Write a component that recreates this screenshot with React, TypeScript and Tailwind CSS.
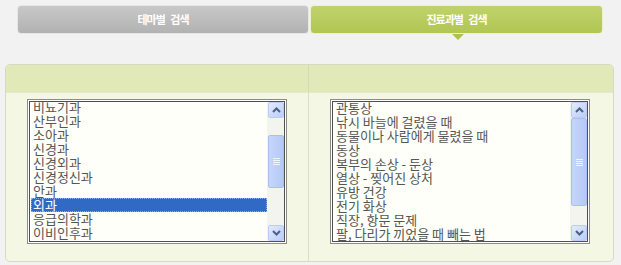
const leftItems = [
  "비뇨기과",
  "산부인과",
  "소아과",
  "신경과",
  "신경외과",
  "신경정신과",
  "안과",
  "외과",
  "응급의학과",
  "이비인후과",
];

const rightItems = [
  "관통상",
  "낚시 바늘에 걸렸을 때",
  "동물이나 사람에게 물렸을 때",
  "동상",
  "복부의 손상 - 둔상",
  "열상 - 찢어진 상처",
  "유방 건강",
  "전기 화상",
  "직장, 항문 문제",
  "팔, 다리가 끼었을 때 빼는 법",
];

const font = { fontFamily: '"Noto Sans CJK KR", "Noto Sans", sans-serif' };

const ScrollButton = ({ up }: { up?: boolean }) => (
  <div className="h-[16px] w-[16px] rounded-[2px] border border-[#bccdf5] bg-gradient-to-br from-[#e4ecfd] to-[#b9cdf8] flex items-center justify-center">
    <svg width="9" height="6" viewBox="0 0 9 6">
      <path
        d={up ? "M1 5 L4.5 1.5 L8 5" : "M1 1 L4.5 4.5 L8 1"}
        fill="none"
        stroke="#4d6185"
        strokeWidth="2"
      />
    </svg>
  </div>
);

const Scrollbar = ({ top, height }: { top: number; height: number }) => (
  <div className="w-[17px] flex flex-col bg-[#f4f4ef] pl-[1px]">
    <ScrollButton up />
    <div className="flex-1">
      <div
        className="w-[16px] rounded-[2px] border border-[#a8bff2] bg-gradient-to-r from-[#c6d6fb] to-[#b4c9f6] flex items-center justify-center"
        style={{ marginTop: top, height }}
      >
        <div className="flex flex-col gap-[1px]">
          <div className="h-[1px] w-[7px] bg-[#eef3fd]" />
          <div className="h-[1px] w-[7px] bg-[#eef3fd]" />
          <div className="h-[1px] w-[7px] bg-[#eef3fd]" />
          <div className="h-[1px] w-[7px] bg-[#eef3fd]" />
        </div>
      </div>
    </div>
    <ScrollButton />
  </div>
);

const ListBox = ({
  items,
  selected,
  offset,
  thumbTop,
  thumbHeight,
}: {
  items: string[];
  selected?: number;
  offset: number;
  thumbTop: number;
  thumbHeight: number;
}) => (
  <div className="w-[260px] h-[145px] border border-[#8c8c8c] bg-white p-[1px]">
    <div className="h-full border border-[#505050] bg-[#fffff9] flex">
      <div className="flex-1 overflow-hidden pl-[1px]">
        <div style={{ marginTop: offset }}>
          {items.map((item, i) => (
            <div
              key={item}
              className={
                i === selected
                  ? "h-[14px] leading-[14px] text-[13px] px-[2px] bg-[#316ac5] text-white outline outline-1 outline-dotted outline-[#8fb0e6] -outline-offset-1"
                  : "h-[14px] leading-[14px] text-[13px] px-[2px] text-[#555555]"
              }
              style={font}
            >
              {item}
            </div>
          ))}
        </div>
      </div>
      <Scrollbar top={thumbTop} height={thumbHeight} />
    </div>
  </div>
);

export default function App() {
  return (
    <div className="w-[621px] h-[265px] bg-[#f2f2f2] pt-[5px]" style={font}>
      <div className="flex pl-[17px] gap-[1px]">
        <div className="w-[292px] h-[29px] rounded-[4px] bg-gradient-to-b from-[#c8c8c8] to-[#b2b2b2] border border-[#e6e6e6] flex items-center justify-center text-white font-bold text-[11px] tracking-[-1px] [word-spacing:4px]">
          테마별 검색
        </div>
        <div className="relative w-[293px] h-[29px] rounded-[4px] bg-gradient-to-b from-[#c0d26b] to-[#b1c652] border border-[#eaf1cc] flex items-center justify-center text-white font-bold text-[11px] tracking-[-1px] [word-spacing:4px]">
          진료과별 검색
          <div className="absolute left-[141px] top-[28px] w-0 h-0 border-l-[6px] border-r-[6px] border-t-[6px] border-l-transparent border-r-transparent border-t-[#adc24e]" />
        </div>
      </div>

      <div className="ml-[5px] mt-[30px] w-[609px] h-[198px] rounded-[5px] border border-[#d6dac4] bg-[#f4f7e4] overflow-hidden flex flex-col">
        <div className="h-[28px] flex bg-[#e1e9b8] border-b border-[#e3e8c9]">
          <div className="w-[303px] border-r border-[#d3d9b5]" />
          <div className="flex-1" />
        </div>
        <div className="flex-1 flex">
          <div className="w-[303px] border-r border-[#dadfc4] pl-[21px] pt-[6px]">
            <ListBox items={leftItems} selected={7} offset={-2} thumbTop={17} thumbHeight={53} />
          </div>
          <div className="flex-1 pl-[21px] pt-[6px]">
            <ListBox items={rightItems} offset={-1} thumbTop={0} thumbHeight={88} />
          </div>
        </div>
      </div>
    </div>
  );
}
